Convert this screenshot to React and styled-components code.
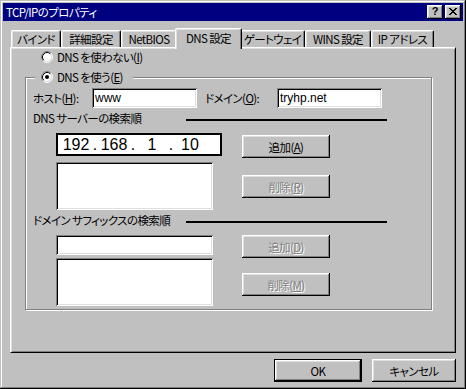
import styled, { createGlobalStyle } from 'styled-components';

const GlobalStyle = createGlobalStyle`
  html, body {
    margin: 0;
    padding: 0;
    background: #c0c0c0;
  }
  body {
    font-family: "Noto Sans CJK JP", "Liberation Sans", sans-serif;
    font-size: 11.5px;
    line-height: 14px;
    letter-spacing: -0.6px;
    font-feature-settings: "palt";
    color: #000;
  }
`;

const tabs = [
  { label: 'バインド', w: 50 },
  { label: '詳細設定', w: 60 },
  { label: 'NetBIOS', w: 56 },
  { label: 'DNS 設定', w: 63, active: true },
  { label: 'ゲートウェイ', w: 65 },
  { label: 'WINS 設定', w: 66 },
  { label: 'IP アドレス', w: 63 },
];

const closeCells = [
  [0, 0], [1, 0], [6, 0], [7, 0],
  [1, 1], [2, 1], [5, 1], [6, 1],
  [2, 2], [3, 2], [4, 2], [5, 2],
  [3, 3], [4, 3],
  [2, 4], [3, 4], [4, 4], [5, 4],
  [1, 5], [2, 5], [5, 5], [6, 5],
  [0, 6], [1, 6], [6, 6], [7, 6],
];

const Radio = ({ checked }) => (
  <RadioSvg width="12" height="12" viewBox="0 0 12 12">
    <circle cx="6" cy="6" r="4.5" fill="#fff" />
    <path d="M2.11 9.89A5.5 5.5 0 0 1 9.89 2.11" stroke="#808080" fill="none" />
    <path d="M9.89 2.11A5.5 5.5 0 0 1 2.11 9.89" stroke="#fff" fill="none" />
    <path d="M2.82 9.18A4.5 4.5 0 0 1 9.18 2.82" stroke="#000" fill="none" />
    <path d="M9.18 2.82A4.5 4.5 0 0 1 2.82 9.18" stroke="#dfdfdf" fill="none" />
    {checked && <circle cx="6" cy="6" r="2" fill="#000" />}
  </RadioSvg>
);

const IpBox = ({ parts }) => (
  <IpField>
    {parts.map((p, i) => (
      <IpPart key={i}>
        <IpNum>{p}</IpNum>
        {i < parts.length - 1 && <IpDot>.</IpDot>}
      </IpPart>
    ))}
  </IpField>
);

const App = () => {
  return (
    <>
      <GlobalStyle />
      <Window>
        <TitleBar>
          <Title>TCP/IPのプロパティ</Title>
          <TitleButtons>
            <TitleButton><HelpMark>?</HelpMark></TitleButton>
            <TitleButton>
              <svg width="8" height="7" viewBox="0 0 8 7" shapeRendering="crispEdges">
                {closeCells.map(([x, y]) => <rect key={x + '-' + y} x={x} y={y} width="1" height="1" fill="#000" />)}
              </svg>
            </TitleButton>
          </TitleButtons>
        </TitleBar>

        <Body>
          <TabRow>
            {tabs.map(t => (
              <Tab key={t.label} $w={t.w} $active={t.active}>{t.label}</Tab>
            ))}
          </TabRow>

          <Panel>
            <RadioRow>
              <Radio />
              <span>DNS を使わない(<u>I</u>)</span>
            </RadioRow>

            <Group>
              <Legend>
                <Radio checked />
                <span>DNS を使う(<u>E</u>)</span>
              </Legend>

              <HostRow>
                <Label $w={59}>ホスト(<u>H</u>):</Label>
                <TextInput $w={105} $h={20} defaultValue="www" />
                <Label $w={72} $ml={8}>ドメイン(<u>O</u>):</Label>
                <TextInput $w={105} $h={20} defaultValue="tryhp.net" />
              </HostRow>

              <Heading>
                <span>DNS サーバーの検索順</span>
                <Rule />
              </Heading>

              <Section>
                <LeftCol $gap={6}>
                  <IpBox parts={['192', '168', '1', '10']} />
                  <ListBox $w={157} $h={48} />
                </LeftCol>
                <RightCol $top={2} $gap={17}>
                  <Button>追加(<u>A</u>)</Button>
                  <Button disabled>削除(<u>R</u>)</Button>
                </RightCol>
              </Section>

              <Heading>
                <span>ドメイン サフィックスの検索順</span>
                <Rule />
              </Heading>

              <Section>
                <LeftCol $gap={3}>
                  <TextInput $w={157} $h={20} defaultValue="" />
                  <ListBox $w={157} $h={48} />
                </LeftCol>
                <RightCol $top={0} $gap={15}>
                  <Button disabled>追加(<u>D</u>)</Button>
                  <Button disabled>削除(<u>M</u>)</Button>
                </RightCol>
              </Section>
            </Group>
          </Panel>

          <Footer>
            <Button $w={88} $default>OK</Button>
            <Button $w={84}>キャンセル</Button>
          </Footer>
        </Body>
      </Window>
    </>
  );
};

const Window = styled.div`
  box-sizing: border-box;
  width: 466px;
  height: 389px;
  padding: 3px;
  background: #c0c0c0;
  box-shadow: inset -1px -1px #000, inset 1px 1px #c0c0c0, inset -2px -2px #808080, inset 2px 2px #fff;
  display: flex;
  flex-direction: column;
`;

const TitleBar = styled.div`
  height: 18px;
  background: #000080;
  padding: 0 2px;
  display: flex;
  align-items: center;
  justify-content: space-between;
`;

const Title = styled.span`
  color: #fff;
  padding-left: 1px;
`;

const TitleButtons = styled.div`
  display: flex;
  gap: 2px;
`;

const TitleButton = styled.div`
  box-sizing: border-box;
  width: 16px;
  height: 14px;
  background: #c0c0c0;
  box-shadow: inset -1px -1px #000, inset 1px 1px #fff, inset -2px -2px #808080, inset 2px 2px #dfdfdf;
  display: flex;
  align-items: center;
  justify-content: center;
  padding-bottom: 1px;
`;

const HelpMark = styled.span`
  font-family: "Liberation Sans", sans-serif;
  font-weight: bold;
  font-size: 11px;
  line-height: 11px;
  letter-spacing: 0;
`;

const Body = styled.div`
  padding: 7px 7px 0;
  display: flex;
  flex-direction: column;
`;

const TabRow = styled.div`
  height: 19px;
  padding-left: 1px;
  display: flex;
  align-items: flex-end;
`;

const Tab = styled.div`
  box-sizing: border-box;
  flex: none;
  width: ${p => (p.$active ? p.$w + 4 : p.$w)}px;
  height: ${p => (p.$active ? 21 : 17)}px;
  margin: ${p => (p.$active ? '0 -2px -2px' : '0')};
  padding-bottom: ${p => (p.$active ? 2 : 0)}px;
  position: relative;
  z-index: ${p => (p.$active ? 1 : 0)};
  background: #c0c0c0;
  border-top: 1px solid #fff;
  border-left: 1px solid #fff;
  border-right: 1px solid #000;
  border-radius: 2px 2px 0 0;
  box-shadow: inset -1px 0 #808080, inset 1px 1px #dfdfdf;
  display: flex;
  align-items: center;
  justify-content: center;
  white-space: nowrap;
`;

const Panel = styled.div`
  box-sizing: border-box;
  height: 306px;
  border-top: 1px solid #fff;
  border-left: 1px solid #fff;
  border-right: 1px solid #000;
  border-bottom: 1px solid #000;
  box-shadow: inset 1px 1px #dfdfdf, inset -1px -1px #808080;
  padding: 2px 0 0 14px;
`;

const RadioRow = styled.div`
  height: 14px;
  padding-left: 16px;
  display: flex;
  align-items: center;
  gap: 4px;
`;

const RadioSvg = styled.svg`
  flex: none;
  display: block;
`;

const Group = styled.div`
  position: relative;
  box-sizing: border-box;
  width: 407px;
  height: 233px;
  margin-top: 13px;
  border: 1px solid #808080;
  box-shadow: 1px 1px 0 #fff, inset 1px 1px 0 #fff;
  padding: 10px 0 0 7px;
`;

const Legend = styled.div`
  position: absolute;
  top: -8px;
  left: 9px;
  height: 14px;
  padding: 0 10px 0 6px;
  background: #c0c0c0;
  display: flex;
  align-items: center;
  gap: 4px;
`;

const HostRow = styled.div`
  height: 20px;
  display: flex;
  align-items: center;
`;

const Label = styled.span`
  flex: none;
  width: ${p => p.$w}px;
  margin-left: ${p => p.$ml || 0}px;
  white-space: nowrap;
`;

const sunken = `
  background: #fff;
  box-shadow: inset 1px 1px #808080, inset -1px -1px #fff, inset 2px 2px #000, inset -2px -2px #dfdfdf;
`;

const TextInput = styled.input`
  box-sizing: border-box;
  width: ${p => p.$w}px;
  height: ${p => p.$h}px;
  border: none;
  outline: none;
  margin: 0;
  padding: 0 3px;
  font-family: "Liberation Sans", sans-serif;
  font-size: 12px;
  letter-spacing: 0;
  color: #000;
  ${sunken}
`;

const ListBox = styled.div`
  box-sizing: border-box;
  width: ${p => p.$w}px;
  height: ${p => p.$h}px;
  ${sunken}
`;

const Heading = styled.div`
  width: 354px;
  height: 14px;
  margin-top: 3px;
  display: flex;
  align-items: center;
  justify-content: space-between;
  white-space: nowrap;
`;

const Rule = styled.div`
  width: 201px;
  height: 2px;
  margin-top: 3px;
  background: #000;
`;

const Section = styled.div`
  margin: 8px 0 0 23px;
  display: flex;
  gap: 20px;
`;

const LeftCol = styled.div`
  width: 166px;
  display: flex;
  flex-direction: column;
  gap: ${p => p.$gap}px;
`;

const RightCol = styled.div`
  padding-top: ${p => p.$top}px;
  display: flex;
  flex-direction: column;
  gap: ${p => p.$gap}px;
`;

const IpField = styled.div`
  box-sizing: border-box;
  width: 166px;
  height: 23px;
  border: 2px solid #000;
  background: #fff;
  padding-left: 3px;
  display: flex;
  align-items: center;
  font-family: "Liberation Sans", sans-serif;
  font-size: 16px;
  line-height: 18px;
  letter-spacing: 0;
`;

const IpPart = styled.div`
  display: flex;
`;

const IpNum = styled.span`
  width: 30px;
  text-align: center;
`;

const IpDot = styled.span`
  width: 8px;
  text-align: center;
`;

const Button = styled.button`
  box-sizing: border-box;
  width: ${p => p.$w || 88}px;
  height: 23px;
  padding: 0;
  margin: 0;
  border: none;
  background: #c0c0c0;
  font: inherit;
  letter-spacing: inherit;
  font-feature-settings: "palt";
  color: ${p => (p.disabled ? '#808080' : '#000')};
  text-shadow: ${p => (p.disabled ? '1px 1px 0 #fff' : 'none')};
  box-shadow: ${p =>
    p.$default
      ? 'inset 0 0 0 1px #000, inset -2px -2px #000, inset 2px 2px #fff, inset -3px -3px #808080, inset 3px 3px #dfdfdf'
      : 'inset -1px -1px #000, inset 1px 1px #fff, inset -2px -2px #808080, inset 2px 2px #dfdfdf'};

  u {
    text-decoration-color: ${p => (p.disabled ? '#808080' : '#000')};
  }
`;

const Footer = styled.div`
  margin-top: 6px;
  display: flex;
  justify-content: flex-end;
  gap: 10px;
`;

export default App;
